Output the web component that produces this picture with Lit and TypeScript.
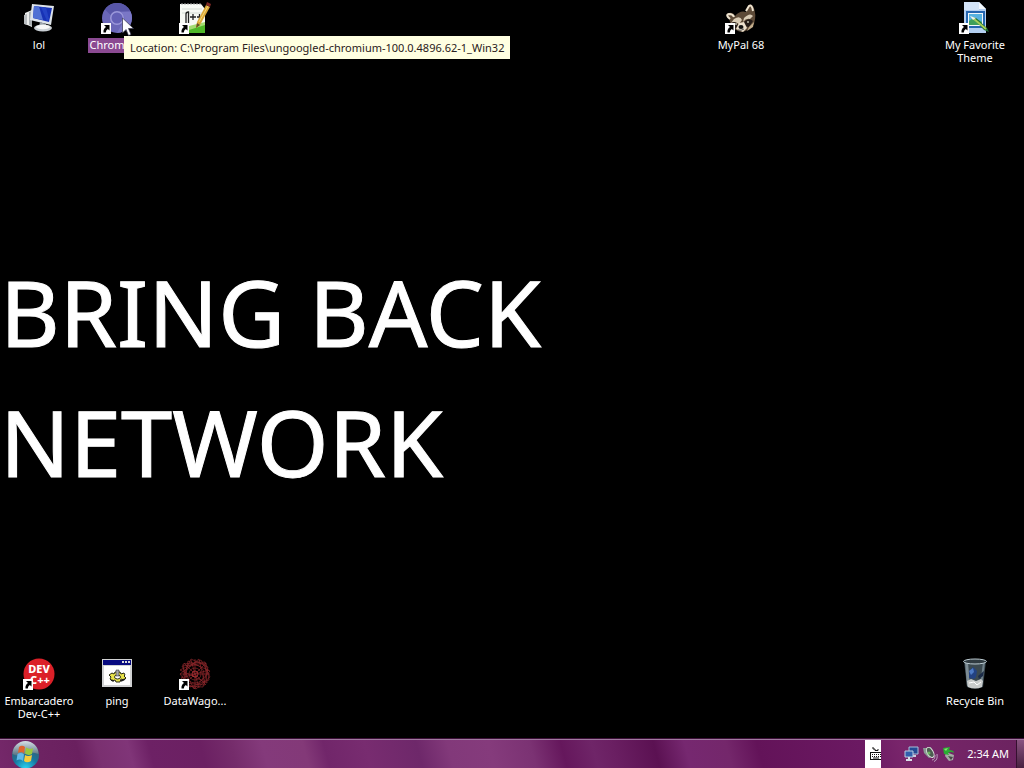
import { LitElement, html, css, svg, nothing } from "lit";
import { customElement, property } from "lit/decorators.js";

const arrow = svg`
  <rect x="0" y="21" width="10" height="11" fill="#fff"/>
  <path d="M3 23H8.500V28.500L6.800 27Q4.800 28.200 4.800 30.500H2.500Q2 27 5 25Z" fill="#000"/>`;

const icons: Record<string, unknown> = {
  computer: svg`
    <path d="M2 11L9 8V25L2 22Z" fill="#eceeed"/><path d="M1 13L4 12V23L1 22Z" fill="#b9bdc0"/>
    <path d="M6 10L9 9V24L6 23Z" fill="#a9afb3"/>
    <path d="M9 2L31 4L28 23L7 18Z" fill="#dde3ea"/>
    <path d="M11 4L29 6L26 20L10 16Z" fill="#1732b5"/>
    <path d="M11 4L16 4.500L20 18L10 16Z" fill="#4f70d4"/>
    <path d="M18 5L23 5.500L26 17L24 19Z" fill="#2443c4"/>
    <path d="M17 20L23 22V25H16Z" fill="#9ba4ad"/>
    <ellipse cx="20" cy="26" rx="9" ry="3.500" fill="#c9cfd4"/><ellipse cx="20" cy="25" rx="7" ry="2.200" fill="#f7f8f8"/>`,
  chromium: svg`
    <circle cx="16" cy="16" r="15" fill="#6a67b8"/>
    <path d="M16 1A15 15 0 0 1 29.500 9.500H16A7 7 0 0 0 9.500 13L4 7.500A15 15 0 0 1 16 1Z" fill="#5856a8"/>
    <path d="M29.500 9.500A15 15 0 0 1 16 31L22 20A7 7 0 0 0 20 10Z" fill="#7a77c6"/>
    <circle cx="16" cy="16" r="7" fill="#9b98da"/><circle cx="16" cy="16" r="5.500" fill="#6360b6"/>`,
  notepad: svg`
    <path d="M1 2H22L26 7V31H1Z" fill="#f8faf5"/>
    <path d="M3 3V1M6 3V1M9 3V1M12 3V1M15 3V1M18 3V1M21 3V1" stroke="#aaa"/>
    <path d="M3 7H23M3 11H23" stroke="#d4dbd4"/>
    <path d="M10 31V24L26 20V31Z" fill="#a4dc72"/><path d="M10 31V28L26 23V31Z" fill="#4fb828"/>
    <path d="M7 21V12Q7 10 9.500 10V21" fill="none" stroke="#222" stroke-width="1.300"/>
    <path d="M11 15H17M14 12V18M18 15H23M20.500 12V18" stroke="#222" stroke-width="1.300"/>
    <path d="M17 26L18 20L27 3L31 5L21 23Z" fill="#dba838"/><path d="M27 3L28 0L32 2L31 5Z" fill="#7e2924"/>
    <path d="M18 21L21 23L17 26Z" fill="#655229"/><path d="M20 20L29 4" stroke="#f3d878"/>`,
  raccoon: svg`
    <path d="M4 16Q0 11 4 11Q8 10 10 14Q15 8 21 10L23 4Q25 1 28 4Q32 12 29 22Q24 29 16 30Q8 28 5 20Z" fill="#5d4a37"/>
    <path d="M5 17Q0 13 4 12Q8 12 9 15M21 9L24 4Q27 2 28 9" fill="none" stroke="#eee3cf" stroke-width="2"/>
    <path d="M9 17Q15 13 17 18L14 22Q10 19 6 21Z" fill="#d9ccb5"/>
    <path d="M19 16Q25 10 28 14L25 17Q21 16 18 20Z" fill="#d9ccb5"/>
    <path d="M6 21Q11 18 13 23L10 27Z" fill="#241b17"/><path d="M19 20Q24 15 28 19L24 25L19 24Z" fill="#241b17"/>
    <path d="M14 21L19 20L22 26L18 30L11 27Z" fill="#ede1cd"/><path d="M24 25L29 20L28 25L22 29Z" fill="#c3ad8c"/>
    <ellipse cx="16" cy="25" rx="2.500" ry="2" fill="#111"/><circle cx="11" cy="22" r="1" fill="#bba"/><circle cx="23" cy="20" r="1" fill="#bba"/>
    <path d="M13 28Q16 29 19 27" fill="none" stroke="#555"/>`,
  theme: svg`
    <path d="M5 0H20L27 7V31H5Z" fill="#b4cff0"/><path d="M5 0H20V8H5Z" fill="#d3e4f8"/><path d="M20 0V7H27Z" fill="#f4f9ff"/>
    <rect x="8" y="10" width="17" height="15" fill="#f4f8fb" stroke="#2566b0" stroke-width="2"/>
    <rect x="10" y="12" width="13" height="11" fill="#57b2e0"/><path d="M10 19Q15 14 23 20V23H10Z" fill="#3f9f5a"/>
    <path d="M13 15L17 16L28 26L30 30L25 28Z" fill="#1f6a2e"/><path d="M15 17L27 27" stroke="#a4cf5a" stroke-width="2"/><path d="M11 14L17 16L14 18Z" fill="#f4f4e6"/>`,
  dev: svg`
    <circle cx="16" cy="16" r="15.500" fill="#db2028"/>
    <g fill="#fff" font-family="'Noto Sans', sans-serif" font-weight="800" font-size="11" text-anchor="middle">
      <text x="16" y="15">DEV</text><text x="17" y="26">C++</text></g>`,
  batch: svg`
    <rect x="1" y="1" width="30" height="28" fill="#d1d2d3"/><rect x="2" y="2" width="28" height="5" fill="#080b80"/>
    <path d="M21 3H23V5H21ZM24 3H26V5H24ZM27 3H29V5H27Z" fill="#ddd"/><rect x="3" y="8" width="26" height="19" fill="#fff"/>
    <path d="M8 17L11 15L13 16L14 14H19L20 16L23 15L24 17L23 18L25 20L23 22L20 21L19 24H15L14 22L11 23L9 21L10 19Z" fill="#e9e34a" stroke="#292a12"/>
    <ellipse cx="16.500" cy="19" rx="3" ry="2" fill="#fff" stroke="#292a12"/><path d="M15 12H18V18H15Z" fill="#aaa" stroke="#222" stroke-width=".5"/>
    <path d="M10 22L13 23M20 23L24 21" stroke="#222" stroke-width="1.500"/>`,
  wagon: svg`
    <g fill="none" stroke="#8c262b" stroke-width=".7">
      <path d="M3 8L27 5L30 22L11 29L1 16L20 1L26 27L5 25L9 3L31 13L15 31Z"/>
      <path d="M1 12L22 2L31 19L17 31L2 22L12 1L29 9L24 29L7 28L4 6L26 4L28 25Z"/>
      <path d="M16 1V31M1 16H31M5 5L27 27M27 5L5 27M2 20L30 12M12 2L20 30"/>
      <circle cx="16" cy="16" r="9"/><circle cx="16" cy="16" r="6"/><circle cx="16" cy="16" r="3" stroke="#c8363c"/>
    </g>`,
  bin: svg`
    <path d="M5 3L27 3L24 29Q16 32 8 29Z" fill="#3b4950"/>
    <path d="M6 4H9L11 29L8 28Z" fill="#7d8c94"/><path d="M24 4H26L23 28L21 28Z" fill="#70818a"/>
    <path d="M10 13L14 9L18 13L17 19L15 21L10 20Z" fill="#234282"/><path d="M19 18L25 13L24 18L20 21Z" fill="#1c2c48"/><path d="M10 13L14 10L15 14L12 17Z" fill="#4d7ac4"/>
    <path d="M8 23L12 21L17 23L22 21L24 23L23 29Q16 32 9 29Z" fill="#c9cccb"/><path d="M10 25L15 24L18 27L22 24" stroke="#fff" fill="none"/>
    <ellipse cx="16" cy="3.500" rx="11.500" ry="2.500" fill="#303b41" stroke="#bccbd1"/>`,
};

@customElement("desktop-icon")
export class DesktopIcon extends LitElement {
  @property() icon = "";
  @property() label = "";
  @property() name = "";
  @property({ type: Boolean }) shortcut = false;
  @property({ type: Boolean }) selected = false;

  static styles = css`
    :host { display: block; }
    .item {
      display: flex; flex-direction: column; align-items: center; gap: 4px;
      width: 100%; padding: 2px 0 0; border: 0; background: none; color: #fff;
      font: 11px/13px "Noto Sans", "Open Sans", sans-serif;
    }
    svg { display: block; width: 32px; height: 32px; flex: none; }
    .label { padding: 0 2px 2px; max-width: 74px; }
    .selected { background: #8b4a92; }
  `;

  render() {
    return html`<button class="item" aria-label=${this.label || this.name}>
      <svg viewBox="0 0 32 32" aria-hidden="true">${icons[this.icon]}${this.shortcut ? arrow : nothing}</svg>
      ${this.label
        ? html`<span class="label ${this.selected ? "selected" : ""}">${this.label}</span>`
        : nothing}
    </button>`;
  }
}

@customElement("task-bar")
export class TaskBar extends LitElement {
  static styles = css`
    :host {
      display: flex; align-items: stretch; height: 28px; border-top: 1px solid #a07aa0; box-shadow: 0 -1px #3c1038;
      background: linear-gradient(75deg, #75286a 0, #6e2463 3%, #6a205f 8%, #7a3070 10%, #803578 13%,
        #6d2165 15%, #6b2062 20%, #752c6b 23%, #843a7b 26%, #833978 30%, #71266a 32%, #782c70 36%, #6e286a 41%,
        #82397a 44%, #853b7c 48%, #7b3273 52%, #65175c 55%, #6f2568 58%, #6a1f62 60%, #5b1152 64%, #762870 67%,
        #74276b 71%, #631359 74%, #6b1962 84%, #79256b 88%, #6b235f 100%);
      color: #fff; font: 11px/14px "Noto Sans", "Open Sans", sans-serif;
    }
    button { display: flex; padding: 0; border: 0; background: none; color: inherit; font: inherit; align-items: center; }
    svg { display: block; }
    .start { margin-left: 11px; }
    .tray { display: flex; align-items: stretch; margin-left: auto; }
    .keys { background: #fff; width: 16px; justify-content: flex-end; }
    .status { display: flex; gap: 2px; margin: 0 10px 0 22px; }
    .show { width: 8px; margin-left: 7px; border-left: 1px solid #35102f; background: linear-gradient(#895380, #47203f); }
  `;

  render() {
    return html`
      <button class="start" aria-label="Start">
        <svg width="28" height="28" viewBox="0 0 28 28">
          <defs>
            <radialGradient id="orb" cx=".5" cy="1" r=".9"><stop stop-color="#2bd5f3"/><stop offset=".5" stop-color="#17779f"/><stop offset="1" stop-color="#42596a"/></radialGradient>
            <linearGradient id="gloss" x2="0" y2="1"><stop stop-color="#d6dfe6"/><stop offset="1" stop-color="#55707e"/></linearGradient>
          </defs>
          <circle cx="14.500" cy="15" r="13.500" fill="url(#orb)"/>
          <path d="M1.500 14A13 13 0 0 1 27.500 14Q20 11 14 14Q7 17 1.500 14Z" fill="url(#gloss)"/>
          <path d="M8 7Q11 4.500 14 7L13 13Q10 11 7 13Z" fill="#e0642e"/>
          <path d="M15 7.500Q19 10 22 8L21 14Q17 16 14 13.500Z" fill="#9ac83d"/>
          <path d="M6.500 14Q10 12 13 14.500L12 21Q9 18.500 5.500 20.500Z" fill="#61b9e8"/>
          <path d="M14 15Q17 17 21 15L20 21Q16 23.500 13 21Z" fill="#f7cb3c"/>
        </svg>
      </button>
      <div class="tray">
        <button class="keys" aria-label="Keyboard">
          <svg width="12" height="14" viewBox="0 0 12 14">
            <path d="M4 0V2H6V3.500H9V2" fill="none" stroke="#111"/>
            <path d="M1 5.500H12M1 12.500H12M1.500 5V13" stroke="#111"/>
            <path d="M3 7.500H12M3 9.500H12" stroke="#111" stroke-dasharray="1 1"/><path d="M4 11H10" stroke="#111"/>
          </svg>
        </button>
        <div class="status">
          <button aria-label="Network">
            <svg width="16" height="16" viewBox="0 0 16 16">
              <path d="M6 1H15V8H6Z" fill="#254993" stroke="#a9bfd9"/><path d="M9 10H13" stroke="#ccd" stroke-width="2"/>
              <path d="M2 5H10V11H2Z" fill="#315eac" stroke="#b9cbe0"/><path d="M3 14H9M6 11V14" stroke="#d8dfe8" stroke-width="2"/>
            </svg>
          </button>
          <button aria-label="Volume">
            <svg width="18" height="16" viewBox="0 0 18 16">
              <path d="M2 2L6 2L10 1L12 10L8 12L3 7Z" fill="#8a9b94"/><ellipse cx="9" cy="6.500" rx="3" ry="5.500" transform="rotate(-30 9 6)" fill="#4c5c51" stroke="#dce4dd"/>
              <circle cx="8" cy="7" r="1.500" fill="#69b55d"/>
              <path d="M11 14Q14 14 14 9M13 15.500Q17 14 16 8" fill="none" stroke="#bba4be"/>
            </svg>
          </button>
          <button aria-label="Safely remove hardware">
            <svg width="16" height="16" viewBox="0 0 16 16">
              <path d="M5 6L13 9L12 14L8 15L4 10Z" fill="#a5aaa5"/><path d="M7 10L12 11L10 14Z" fill="#454a45"/>
              <path d="M2 2L9 1L8 4Q13 4 13 7Q10 5 7 7L8 9L3 8Z" fill="#28ad32"/><path d="M3 3L7 2L5 5Z" fill="#87dd74"/>
            </svg>
          </button>
        </div>
        <button class="clock">2:34 AM</button>
        <button class="show" aria-label="Show desktop"></button>
      </div>`;
  }
}

@customElement("app-root")
export class AppRoot extends LitElement {
  static styles = css`
    :host { display: flex; flex-direction: column; height: 100vh; overflow: hidden; background: #000; position: relative; }
    .desktop { flex: 1; display: flex; flex-direction: column; min-height: 0; }
    .row { display: grid; grid-template-columns: repeat(13, 78px); height: 83px; align-items: start; }
    .far { grid-column: 10; }
    .last { grid-column: 13; }
    .wallpaper { flex: 1; display: flex; align-items: center; padding-top: 14px; }
    .message {
      margin: 0; max-width: 640px; color: #fff; font: 400 92px/130px "Noto Sans", "Open Sans", sans-serif;
      -webkit-text-stroke: 1px #fff;
    }
    .tooltip {
      position: absolute; left: 124px; top: 36px; padding: 4px 6px; background: #ffffe1; color: #2a2020;
      font: 11px/15px "Noto Sans", "Open Sans", sans-serif; white-space: nowrap;
    }
    .cursor { position: absolute; left: 122px; top: 17px; }
  `;

  render() {
    return html`
      <main class="desktop">
        <div class="row">
          <desktop-icon icon="computer" label="lol"></desktop-icon>
          <desktop-icon icon="chromium" label="Chromium" shortcut selected></desktop-icon>
          <desktop-icon icon="notepad" name="Notepad++" shortcut></desktop-icon>
          <desktop-icon class="far" icon="raccoon" label="MyPal 68" shortcut></desktop-icon>
          <desktop-icon class="last" icon="theme" label="My Favorite Theme" shortcut></desktop-icon>
        </div>
        <div class="wallpaper"><h1 class="message">BRING BACK NETWORK</h1></div>
        <div class="row">
          <desktop-icon icon="dev" label="Embarcadero Dev-C++" shortcut></desktop-icon>
          <desktop-icon icon="batch" label="ping"></desktop-icon>
          <desktop-icon icon="wagon" label="DataWago..." shortcut></desktop-icon>
          <desktop-icon class="last" icon="bin" label="Recycle Bin"></desktop-icon>
        </div>
      </main>
      <task-bar></task-bar>
      <div class="tooltip" role="tooltip">Location: C:\\Program Files\\ungoogled-chromium-100.0.4896.62-1_Win32</div>
      <svg class="cursor" width="12" height="20" viewBox="0 0 12 20" aria-hidden="true">
        <path d="M.5 1V16L4 12.500L6.500 18.500L9 17.500L6.500 11.500H11.500Z" fill="#fff" stroke="#34344c" stroke-width=".7"/>
      </svg>`;
  }
}
